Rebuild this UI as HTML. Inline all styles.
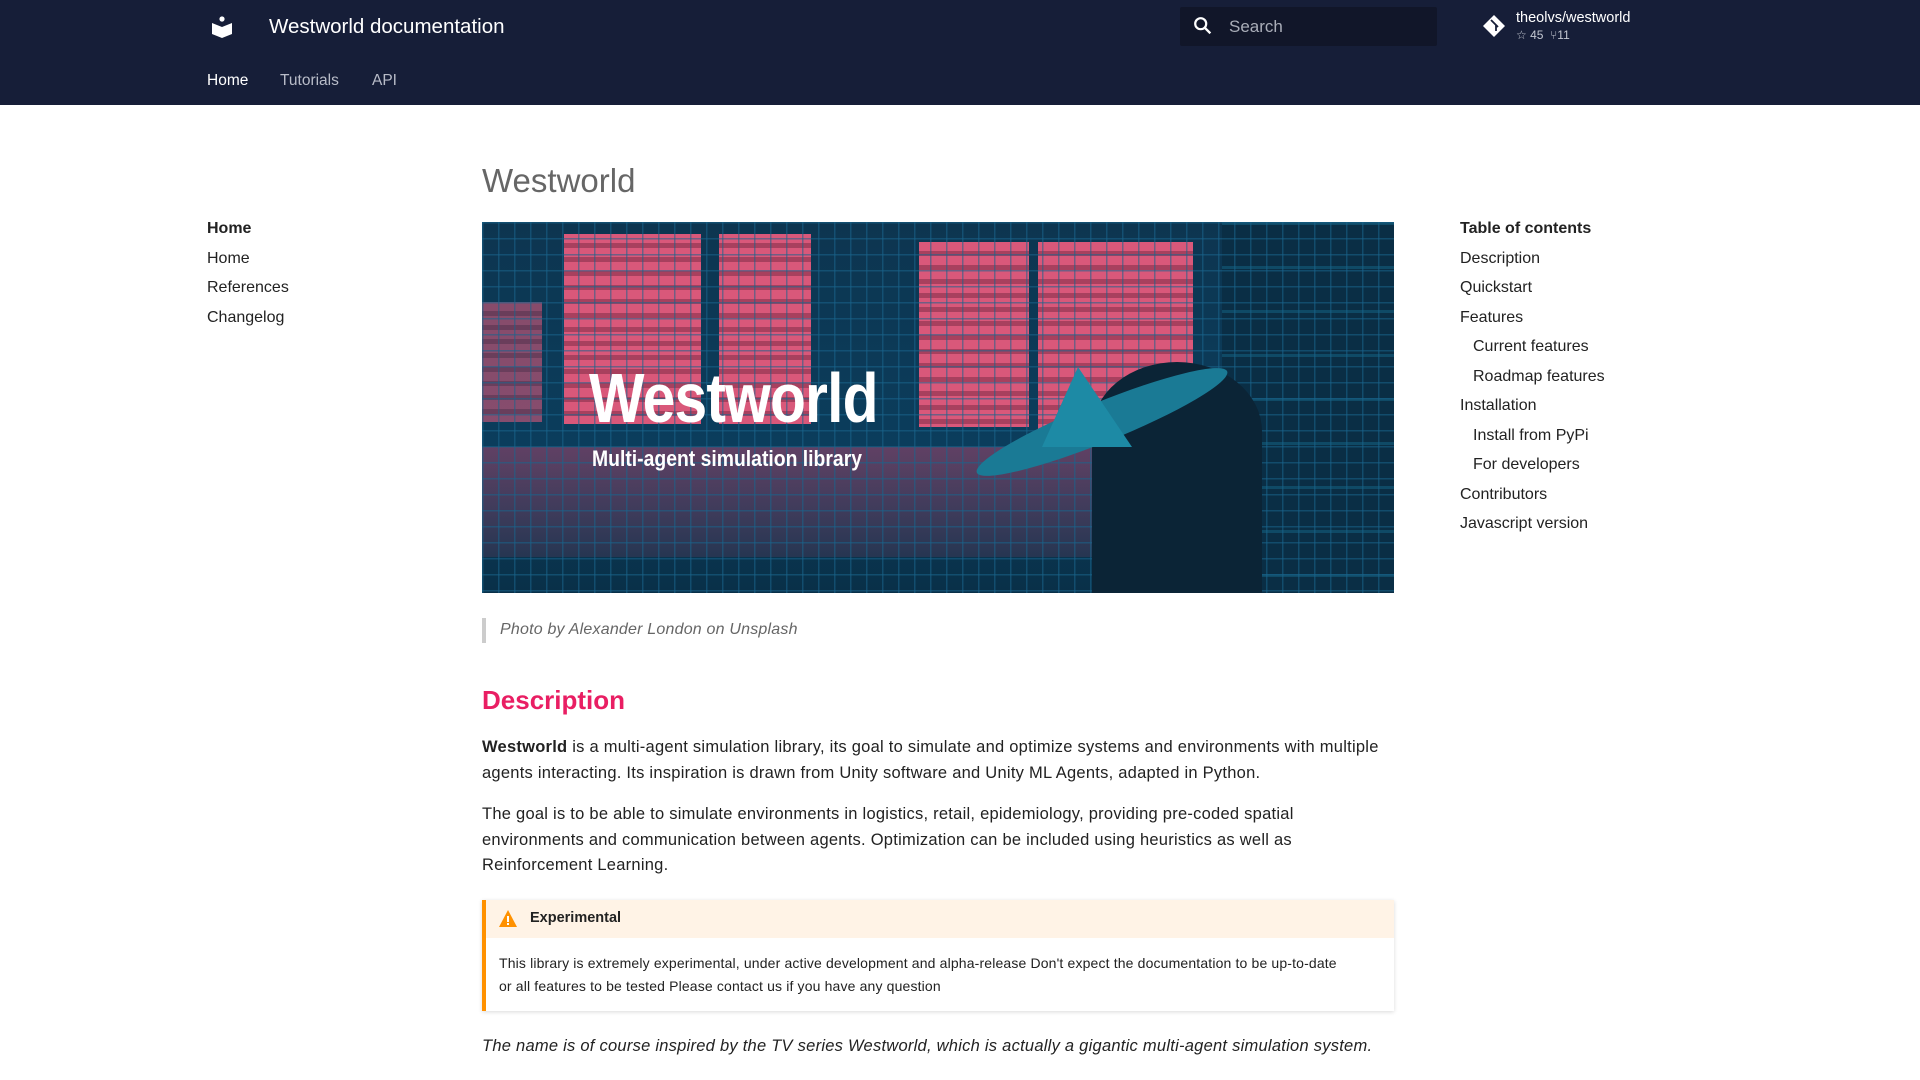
<!DOCTYPE html>
<html><head><meta charset="utf-8"><style>
*{margin:0;padding:0;box-sizing:border-box}
body{width:1920px;height:1080px;overflow:hidden;background:#fff;font-family:"Liberation Sans",sans-serif;color:#222}
.hdr{position:absolute;left:0;top:0;width:1920px;height:105px;background:#161e38}
.abs{position:absolute}
.nav a{position:absolute;font-size:16px;color:#222;white-space:nowrap}
.toc a{position:absolute;font-size:16px;color:#222;white-space:nowrap}
.p{position:absolute;left:482px;width:920px;font-size:16.5px;line-height:25.5px;color:#222;letter-spacing:.25px;white-space:nowrap}
.hero{position:absolute;left:482px;top:222px;width:912px;height:371px;overflow:hidden;background:linear-gradient(180deg,#0d3550,#0b3d5c 60%,#093048)}
.pk{position:absolute;background:repeating-linear-gradient(180deg,#d9587a 0 9px,#a8405e 9px 14px)}
.grid{position:absolute;inset:0;background:repeating-linear-gradient(90deg,rgba(25,100,140,.55) 0 1.5px,transparent 1.5px 16px),repeating-linear-gradient(180deg,rgba(25,100,140,.55) 0 1.5px,transparent 1.5px 16px)}
</style></head><body>
<div class="hdr">
 <svg class="abs" style="left:210px;top:15px" width="24" height="24" viewBox="0 0 24 24"><circle cx="12" cy="4" r="2.6" fill="#fff"/><path d="M2 8 L12 12 L22 8 V19 L12 23 L2 19Z" fill="#fff"/></svg>
 <div class="abs" style="left:269px;top:15px;font-size:20.5px;color:#fff">Westworld documentation</div>
 <div class="abs" style="left:207px;top:72px;font-size:15.5px;color:#fff">Home</div>
 <div class="abs" style="left:280px;top:72px;font-size:15.5px;color:#b8bcc8">Tutorials</div>
 <div class="abs" style="left:372px;top:72px;font-size:15.5px;color:#b8bcc8">API</div>
 <div class="abs" style="left:1180px;top:7px;width:257px;height:39px;background:#111629;border-radius:2px"></div>
 <svg class="abs" style="left:1192px;top:15px" width="22" height="22" viewBox="0 0 24 24"><circle cx="9.5" cy="9.5" r="6" fill="none" stroke="#fff" stroke-width="2.4"/><path d="M14 14l6 6" stroke="#fff" stroke-width="2.6"/></svg>
 <div class="abs" style="left:1229px;top:17px;font-size:17px;color:#a9adb8">Search</div>
 <svg class="abs" style="left:1482px;top:14px" width="24" height="24" viewBox="0 0 24 24"><path d="M12 1L23 12 12 23 1 12Z" fill="#fff"/><path d="M9 6l5 5v6M14 11l2 2" stroke="#161e38" stroke-width="1.8" fill="none"/></svg>
 <div class="abs" style="left:1516px;top:10px;font-size:14.5px;color:#fff">theolvs/westworld</div>
 <div class="abs" style="left:1516px;top:28px;font-size:12px;color:#c4c8d2">☆ 45 &nbsp;⑂11</div>
</div>

<div class="nav">
 <a style="left:207px;top:220px;font-weight:bold">Home</a>
 <a style="left:207px;top:250px">Home</a>
 <a style="left:207px;top:279px">References</a>
 <a style="left:207px;top:309px">Changelog</a>
</div>
<div class="toc">
 <a style="left:1460px;top:220px;font-weight:bold">Table of contents</a>
 <a style="left:1460px;top:250px">Description</a>
 <a style="left:1460px;top:279px">Quickstart</a>
 <a style="left:1460px;top:309px">Features</a>
 <a style="left:1473px;top:338px">Current features</a>
 <a style="left:1473px;top:368px">Roadmap features</a>
 <a style="left:1460px;top:397px">Installation</a>
 <a style="left:1473px;top:427px">Install from PyPi</a>
 <a style="left:1473px;top:456px">For developers</a>
 <a style="left:1460px;top:486px">Contributors</a>
 <a style="left:1460px;top:515px">Javascript version</a>
</div>

<div class="abs" style="left:482px;top:162px;font-size:33px;color:#666;font-weight:300">Westworld</div>

<div class="hero">
 <div class="pk" style="left:82px;top:12px;width:137px;height:190px"></div>
 <div class="pk" style="left:237px;top:12px;width:92px;height:190px"></div>
 <div class="pk" style="left:437px;top:20px;width:110px;height:185px"></div>
 <div class="pk" style="left:556px;top:20px;width:155px;height:190px"></div>
 <div class="pk" style="left:0px;top:80px;width:60px;height:120px;opacity:.6"></div>
 <div class="abs" style="left:0;top:225px;width:740px;height:110px;background:linear-gradient(180deg,rgba(200,70,110,.45),rgba(200,70,110,.15))"></div>
 <div class="abs" style="left:740px;top:0;width:172px;height:371px;background:repeating-linear-gradient(180deg,#0f4a66 0 3px,#0a2e45 3px 44px)"></div>
 <div class="grid"></div>
 <div class="abs" style="left:610px;top:140px;width:170px;height:231px;background:#0b2436;border-radius:50% 50% 0 0/30% 30% 0 0"></div>
 <div class="abs" style="left:485px;top:180px;width:270px;height:40px;background:#1a7a95;transform:rotate(-22deg);border-radius:50%"></div>
 <div class="abs" style="left:560px;top:145px;width:90px;height:80px;background:#1d8aa5;clip-path:polygon(40% 0,100% 100%,0 100%)"></div>
 <div class="abs" style="left:107px;top:136px;font-family:'Liberation Sans Narrow','Liberation Sans',sans-serif;font-weight:bold;font-size:70px;color:#fff;transform:scaleX(.84);transform-origin:left;letter-spacing:-1px">Westworld</div>
 <div class="abs" style="left:110px;top:224px;font-family:'Liberation Sans Narrow','Liberation Sans',sans-serif;font-weight:bold;font-size:22px;color:#fff;transform:scaleX(.88);transform-origin:left">Multi-agent simulation library</div>
</div>

<div class="abs" style="left:482px;top:618px;width:4px;height:25px;background:#ccc"></div>
<div class="abs" style="left:500px;top:621px;font-size:16px;font-style:italic;color:#666;letter-spacing:.2px">Photo by Alexander London on Unsplash</div>

<div class="abs" style="left:482px;top:685px;font-size:26px;color:#e91e63;font-weight:bold">Description</div>
<div class="p" style="top:735px"><b>Westworld</b> is a multi-agent simulation library, its goal to simulate and optimize systems and environments with multiple<br>agents interacting. Its inspiration is drawn from Unity software and Unity ML Agents, adapted in Python.</div>
<div class="p" style="top:802px">The goal is to be able to simulate environments in logistics, retail, epidemiology, providing pre-coded spatial<br>environments and communication between agents. Optimization can be included using heuristics as well as<br>Reinforcement Learning.</div>

<div class="abs" style="left:482px;top:900px;width:912px;height:111px;border-left:4px solid #ff9100;box-shadow:0 1px 4px rgba(0,0,0,.15);background:#fff">
 <div style="height:38px;background:#fff3e6;padding:10px 0 0 44px;font-size:14.5px;font-weight:bold">Experimental</div>
 <svg class="abs" style="left:12px;top:9px" width="20" height="19" viewBox="0 0 20 19"><path d="M10 1L19 18H1Z" fill="#ff9100"/><rect x="9" y="7" width="2" height="6" fill="#fff"/><rect x="9" y="14" width="2" height="2" fill="#fff"/></svg>
 <div style="padding:14px 12px 0 13px;font-size:14px;line-height:23px;white-space:nowrap;letter-spacing:.15px">This library is extremely experimental, under active development and alpha-release Don't expect the documentation to be up-to-date<br>or all features to be tested Please contact us if you have any question</div>
</div>
<div class="p" style="top:1034px;font-style:italic">The name is of course inspired by the TV series Westworld, which is actually a gigantic multi-agent simulation system.</div>
</body></html>
